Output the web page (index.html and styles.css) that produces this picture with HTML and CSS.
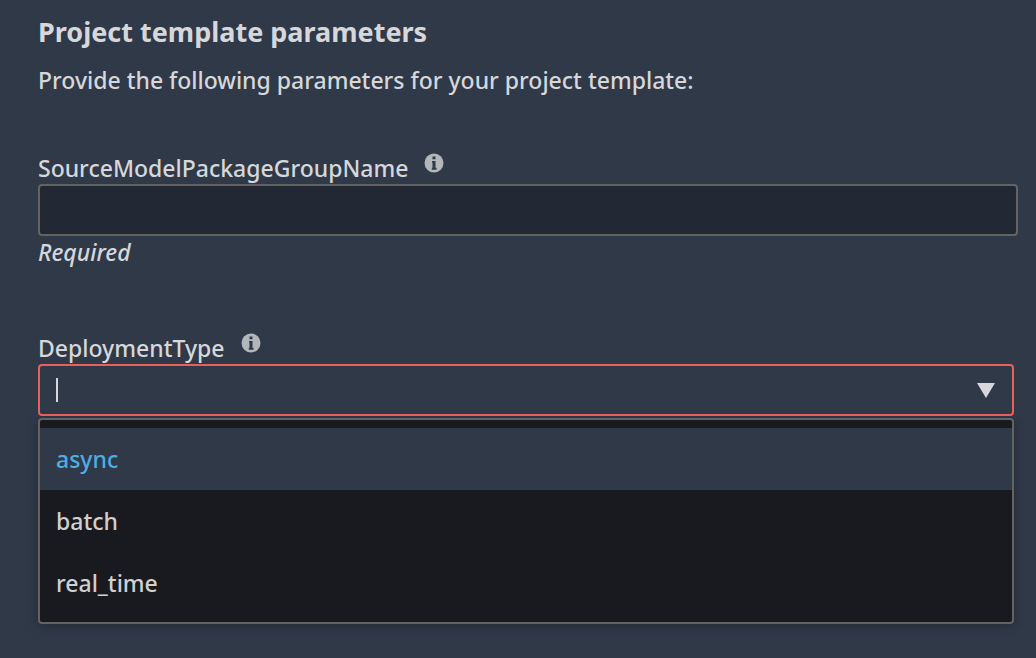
FILE: index.html
```html
<!DOCTYPE html>
<html lang="en">
<head>
<meta charset="utf-8">
<meta name="viewport" content="width=device-width, initial-scale=1">
<title>Project template parameters</title>
<link rel="stylesheet" href="styles.css">
</head>
<body>
<main class="panel">
  <header class="intro">
    <h1 class="title">Project template parameters</h1>
    <p class="description">Provide the following parameters for your project template:</p>
  </header>
  <form class="form">
    <div class="field">
      <div class="label-row">
        <label class="label" for="group-name">SourceModelPackageGroupName</label>
        <svg class="info" viewBox="0 0 20 20" aria-hidden="true">
          <circle class="info-disc" cx="10" cy="10" r="9.5"/>
          <path class="info-mark" d="M8.5 3.4h3v2.8h-3zM8 8h3.5v6.8h1v1.9H7.8v-1.9h.7V9.6H8z"/>
        </svg>
      </div>
      <input class="text-input" id="group-name" type="text" aria-describedby="group-hint">
      <p class="hint" id="group-hint">Required</p>
    </div>
    <div class="field field-select">
      <div class="label-row">
        <label class="label" for="deployment-type">DeploymentType</label>
        <svg class="info" viewBox="0 0 20 20" aria-hidden="true">
          <circle class="info-disc" cx="10" cy="10" r="9.5"/>
          <path class="info-mark" d="M8.5 3.4h3v2.8h-3zM8 8h3.5v6.8h1v1.9H7.8v-1.9h.7V9.6H8z"/>
        </svg>
      </div>
      <div class="combo">
        <span class="caret"></span>
        <input class="combo-input" id="deployment-type" type="text" role="combobox" aria-expanded="true" aria-controls="deployment-options" aria-invalid="true">
        <svg class="arrow" viewBox="0 0 18 15" aria-hidden="true"><path d="M0 0h18L9 15z"/></svg>
      </div>
      <ul class="menu" id="deployment-options" role="listbox">
        <li class="option option-active" role="option" aria-selected="true">async</li>
        <li class="option" role="option" aria-selected="false">batch</li>
        <li class="option" role="option" aria-selected="false">real_time</li>
      </ul>
    </div>
  </form>
</main>
</body>
</html>
```
FILE: styles.css
```css
* {
  box-sizing: border-box;
}

body {
  margin: 0;
  background: #303948;
  color: #d5d7db;
  font-family: "Noto Sans", "Open Sans", sans-serif;
  font-size: 23px;
  font-weight: 500;
  line-height: 32px;
}

.panel {
  padding: 16px 18px 34px 38px;
}

.title {
  margin: 0;
  font-size: 27px;
  font-weight: 700;
  line-height: 32px;
}

.description {
  margin: 16px 0 0;
}

.form {
  display: flex;
  flex-direction: column;
  gap: 64px;
  margin-top: 56px;
}

.label-row {
  display: flex;
  align-items: flex-start;
  gap: 16px;
}

.info {
  width: 20px;
  height: 20px;
  margin-top: 1px;
}

.info-disc {
  fill: #b3b6ba;
}

.info-mark {
  fill: #303948;
}

.text-input {
  display: block;
  width: 100%;
  height: 52px;
  padding: 0 16px;
  border: 2px solid #636363;
  border-radius: 4px;
  background: #222935;
  color: inherit;
  font: inherit;
  outline: none;
}

.hint {
  margin: 0;
  font-style: italic;
}

.field-select {
  margin-right: 4px;
}

.combo {
  position: relative;
  display: flex;
  align-items: center;
  height: 52px;
  padding: 0 17px 0 16px;
  border: 2px solid #e95f5c;
  border-radius: 4px;
}

.combo-input {
  flex: 1;
  min-width: 0;
  padding: 0;
  border: 0;
  background: transparent;
  color: inherit;
  font: inherit;
  outline: none;
}

.caret {
  position: absolute;
  left: 16px;
  width: 2px;
  height: 24px;
  background: #d5d7db;
}

.arrow {
  width: 18px;
  height: 15px;
  fill: #d5d7db;
}

.menu {
  margin: 2px 0 0;
  padding: 8px 0;
  border: 2px solid #636363;
  border-radius: 4px;
  background: #191a1f;
  box-shadow: 0 2px 10px rgba(0, 0, 0, 0.25);
  list-style: none;
}

.option {
  padding: 15px 16px;
  color: #d0d0d0;
}

.option-active {
  background: #303948;
  color: #4caee2;
}
```
